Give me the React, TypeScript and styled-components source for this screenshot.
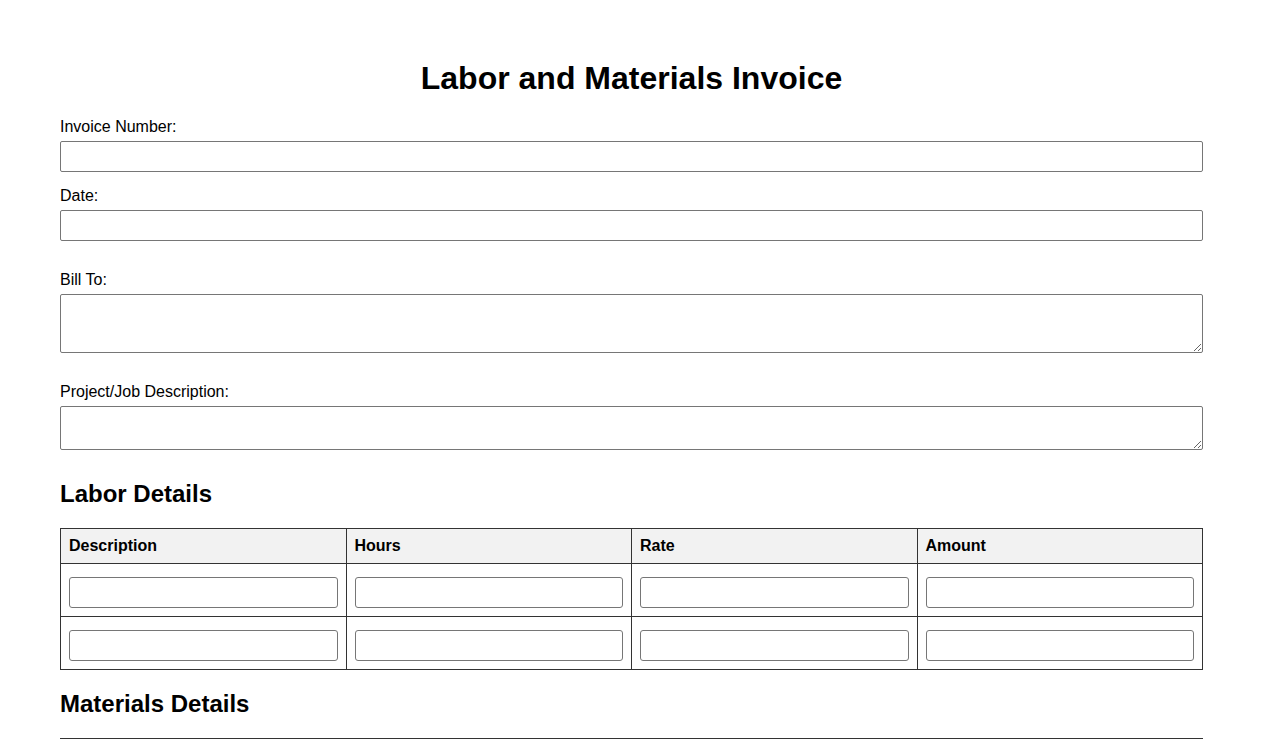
import styled, { createGlobalStyle } from "styled-components";

const GlobalStyle = createGlobalStyle`
  body {
    margin: 0;
    background: #ffffff;
    font-family: "Liberation Sans", Arial, sans-serif;
    color: #000000;
  }
  * {
    box-sizing: border-box;
  }
`;

const laborColumns = ["Description", "Hours", "Rate", "Amount"];
const materialColumns = ["Description", "Quantity", "Unit Price", "Amount"];

function App() {
  return (
    <>
      <GlobalStyle />
      <Page>
        <Title>Labor and Materials Invoice</Title>

        <Field $space={13}>
          <Label htmlFor="invoice-number">Invoice Number:</Label>
          <TextInput id="invoice-number" type="text" />
        </Field>
        <Field $space={28}>
          <Label htmlFor="invoice-date">Date:</Label>
          <TextInput id="invoice-date" type="text" />
        </Field>
        <Field $space={28}>
          <Label htmlFor="bill-to">Bill To:</Label>
          <TextArea id="bill-to" $height={59} />
        </Field>
        <Field $space={30}>
          <Label htmlFor="project">Project/Job Description:</Label>
          <TextArea id="project" $height={44} />
        </Field>

        <SectionTitle>Labor Details</SectionTitle>
        <Table>
          <thead>
            <tr>
              {laborColumns.map((col) => (
                <HeadCell key={col}>{col}</HeadCell>
              ))}
            </tr>
          </thead>
          <tbody>
            {[0, 1].map((row) => (
              <tr key={row}>
                {laborColumns.map((col) => (
                  <Cell key={col}>
                    <CellInput type="text" aria-label={col} />
                  </Cell>
                ))}
              </tr>
            ))}
          </tbody>
        </Table>

        <SectionTitle $top={20}>Materials Details</SectionTitle>
        <Table>
          <thead>
            <tr>
              {materialColumns.map((col) => (
                <HeadCell key={col}>{col}</HeadCell>
              ))}
            </tr>
          </thead>
          <tbody>
            {[0, 1].map((row) => (
              <tr key={row}>
                {materialColumns.map((col) => (
                  <Cell key={col}>
                    <CellInput type="text" aria-label={col} />
                  </Cell>
                ))}
              </tr>
            ))}
          </tbody>
        </Table>
      </Page>
    </>
  );
}

const Page = styled.div`
  padding: 60px 60px 40px;
`;

const Title = styled.h1`
  margin: 0 0 19px;
  font-size: 32px;
  line-height: 37px;
  font-weight: bold;
  text-align: center;
`;

const Field = styled.div<{ $space: number }>`
  display: flex;
  flex-direction: column;
  margin-bottom: ${(p) => p.$space}px;
`;

const Label = styled.label`
  display: block;
  font-size: 16px;
  line-height: 21px;
  margin-bottom: 4px;
`;

const TextInput = styled.input`
  display: block;
  width: 100%;
  height: 31px;
  margin: 0;
  padding: 4px 6px;
  border: 1px solid #767676;
  border-radius: 2px;
  font-family: "Liberation Sans", Arial, sans-serif;
  font-size: 14px;
  background: #ffffff;
`;

const TextArea = styled.textarea<{ $height: number }>`
  display: block;
  width: 100%;
  height: ${(p) => p.$height}px;
  margin: 0;
  padding: 4px 6px;
  border: 1px solid #767676;
  border-radius: 2px;
  font-family: "Liberation Sans", Arial, sans-serif;
  font-size: 14px;
  background: #ffffff;
`;

const SectionTitle = styled.h2<{ $top?: number }>`
  margin: ${(p) => p.$top ?? 0}px 0 20px;
  font-size: 24px;
  line-height: 28px;
  font-weight: bold;
`;

const Table = styled.table`
  width: 100%;
  table-layout: fixed;
  border-collapse: collapse;
  border: 1px solid #333333;
`;

const HeadCell = styled.th`
  width: 25%;
  padding: 8px;
  border: 1px solid #333333;
  background: #f2f2f2;
  text-align: left;
  font-size: 16px;
  line-height: 18px;
  font-weight: bold;
`;

const Cell = styled.td`
  padding: 8px;
  border: 1px solid #333333;
  vertical-align: top;
`;

const CellInput = styled.input`
  display: block;
  width: 100%;
  height: 31px;
  margin: 5px 0 0;
  padding: 4px 6px;
  border: 1px solid #767676;
  border-radius: 3px;
  font-family: "Liberation Sans", Arial, sans-serif;
  font-size: 14px;
  background: #ffffff;
`;

export default App;
